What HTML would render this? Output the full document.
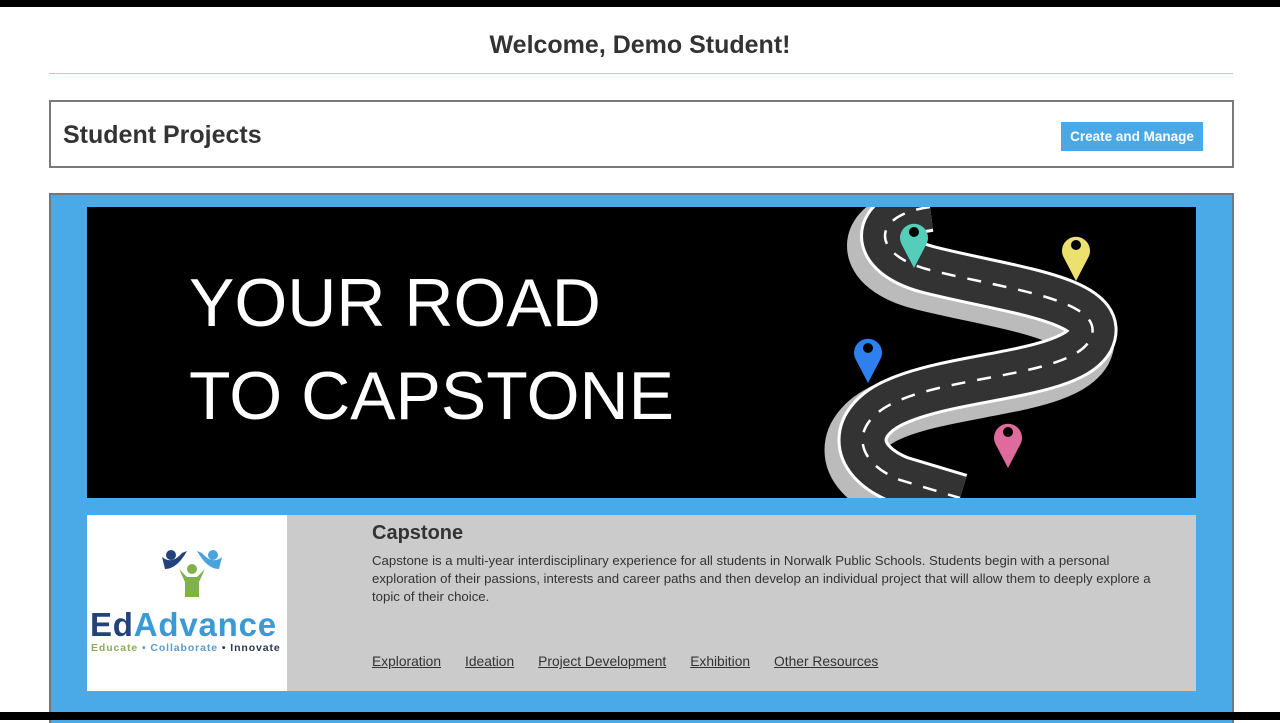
<!DOCTYPE html>
<html><head><meta charset="utf-8"><style>
*{margin:0;padding:0;box-sizing:border-box}
body{width:1280px;height:720px;background:#fff;font-family:"Liberation Sans","DejaVu Sans",sans-serif;position:relative;overflow:hidden;color:#333}
.abs{position:absolute}
a{color:#333}
</style></head><body>
<div class="abs" style="left:0;top:0;width:1280px;height:7px;background:#000"></div>
<div class="abs" style="left:0;top:31px;width:1280px;text-align:center;font-size:25px;font-weight:bold;color:#333">Welcome, Demo Student!</div>
<div class="abs" style="left:49px;top:73px;width:1184px;height:1px;background:#a9cbe4"></div>
<div class="abs" style="left:49px;top:100px;width:1185px;height:68px;border:2px solid #7a7a7a"></div>
<div class="abs" style="left:63px;top:121px;font-size:25px;font-weight:bold;color:#333">Student Projects</div>
<div class="abs" style="left:1061px;top:122px;width:142px;height:29px;background:#4aa8e6;color:#fff;font-size:13.5px;font-weight:bold;text-align:center;line-height:29px">Create and Manage</div>
<div class="abs" style="left:49px;top:193px;width:1185px;height:530px;background:#4aaae8;border:2px solid #6a7a88;border-bottom:none"></div>
<div class="abs" style="left:87px;top:207px;width:1109px;height:291px;background:#000;overflow:hidden">
<div class="abs" style="left:102px;top:50px;color:#fff;font-size:68px;line-height:93px;font-weight:normal">YOUR ROAD<br>TO CAPSTONE</div>
<svg class="abs" style="left:733px;top:0" width="376" height="291" viewBox="820 207 376 291">
<path d="M930 207 C870 215 870 255 930 270 C1010 290 1110 300 1090 340 C1070 375 960 375 900 400 C850 420 850 460 900 480 L960 498" fill="none" stroke="#bbb" stroke-width="60" transform="translate(-8,10)"/>
<path d="M930 207 C870 215 870 255 930 270 C1010 290 1110 300 1090 340 C1070 375 960 375 900 400 C850 420 850 460 900 480 L960 498" fill="none" stroke="#fff" stroke-width="50"/>
<path d="M930 207 C870 215 870 255 930 270 C1010 290 1110 300 1090 340 C1070 375 960 375 900 400 C850 420 850 460 900 480 L960 498" fill="none" stroke="#333" stroke-width="44"/>
<path d="M930 207 C870 215 870 255 930 270 C1010 290 1110 300 1090 340 C1070 375 960 375 900 400 C850 420 850 460 900 480 L960 498" fill="none" stroke="#fff" stroke-width="2.5" stroke-dasharray="14 12"/>
<g><path d="M914 268 L902 245 A14 14 0 1 1 926 245 Z" fill="#55cdbb"/><circle cx="914" cy="232" r="5" fill="#000"/></g>
<g><path d="M1076 281 L1064 258 A14 14 0 1 1 1088 258 Z" fill="#ece06e"/><circle cx="1076" cy="245" r="5" fill="#000"/></g>
<g><path d="M868 383 L856 360 A14 14 0 1 1 880 360 Z" fill="#2e7ff0"/><circle cx="868" cy="348" r="5" fill="#000"/></g>
<g><path d="M1008 468 L996 445 A14 14 0 1 1 1020 445 Z" fill="#df6a9c"/><circle cx="1008" cy="432" r="5" fill="#000"/></g>
</svg>
</div>
<div class="abs" style="left:87px;top:515px;width:200px;height:176px;background:#fff">
<svg class="abs" style="left:70px;top:32px" width="70" height="60" viewBox="0 0 70 60">
<circle cx="14" cy="8" r="5" fill="#24427a"/><path d="M5 10 Q15 18 25 6 L30 4 Q20 22 8 22 Z" fill="#24427a"/>
<circle cx="56" cy="8" r="5" fill="#4aa3dc"/><path d="M65 10 Q55 18 45 6 L40 4 Q50 22 62 22 Z" fill="#4aa3dc"/>
<circle cx="35" cy="22" r="5" fill="#7fb24a"/><path d="M22 22 L30 30 L40 30 L48 22 L42 35 L42 50 L28 50 L28 35 Z" fill="#7fb24a"/>
</svg>
<div class="abs" style="left:3px;top:91px;font-size:33px;font-weight:bold;letter-spacing:0.8px"><span style="color:#24427a">Ed</span><span style="color:#3a9ad6">Advance</span></div>
<div class="abs" style="left:4px;top:127px;font-size:10.5px;font-weight:bold;letter-spacing:0.9px;white-space:nowrap"><span style="color:#8aae5a">Educate</span> <span style="color:#5a9ad0">• Collaborate</span> <span style="color:#2a3650">• Innovate</span></div>
</div>
<div class="abs" style="left:287px;top:515px;width:909px;height:176px;background:#cbcbcb"></div>
<div class="abs" style="left:372px;top:522px;font-size:20px;font-weight:bold;color:#333">Capstone</div>
<div class="abs" style="left:372px;top:552px;width:795px;font-size:13.2px;line-height:18px;color:#333">Capstone is a multi-year interdisciplinary experience for all students in Norwalk Public Schools. Students begin with a personal exploration of their passions, interests and career paths and then develop an individual project that will allow them to deeply explore a topic of their choice.</div>
<div class="abs" style="left:372px;top:654px;font-size:13.8px;white-space:nowrap">
<a style="text-decoration:underline;margin-right:24px">Exploration</a><a style="text-decoration:underline;margin-right:24px">Ideation</a><a style="text-decoration:underline;margin-right:24px">Project Development</a><a style="text-decoration:underline;margin-right:24px">Exhibition</a><a style="text-decoration:underline">Other Resources</a></div>
<div class="abs" style="left:0;top:712px;width:1280px;height:8px;background:#000"></div>
</body></html>
